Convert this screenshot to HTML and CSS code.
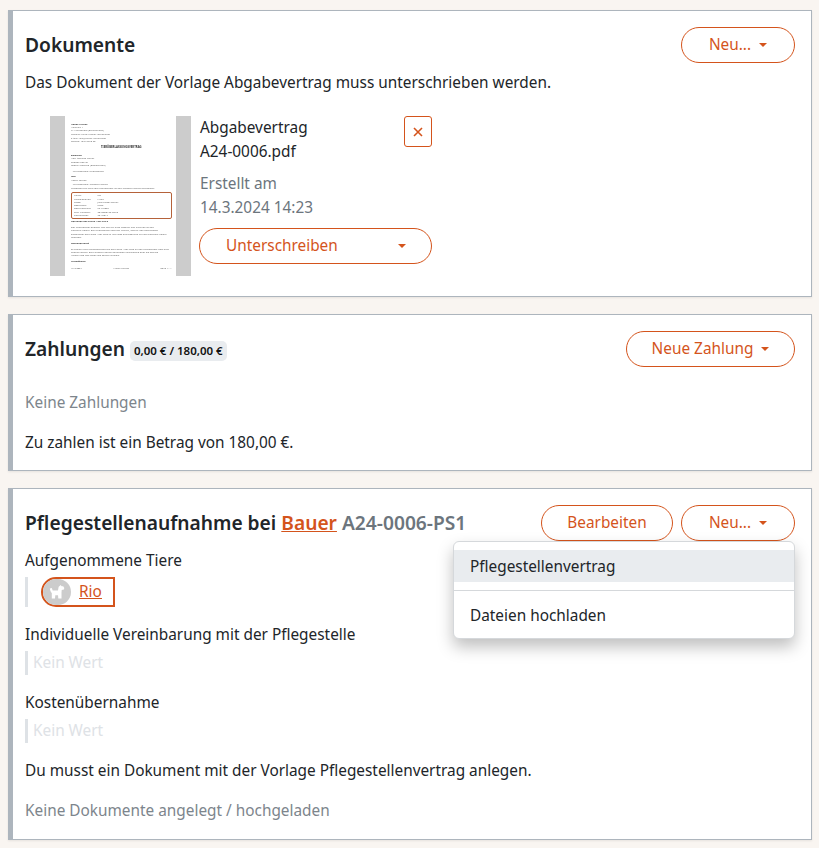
FILE: index.html
```html
<!DOCTYPE html>
<html lang="de">
<head>
    <meta charset="UTF-8">
    <title>Vermittlung</title>
    <link rel="stylesheet" href="styles.css">
</head>
<body>
    <section class="card card-docs">
        <div class="card-head">
            <h2>Dokumente</h2>
            <button class="btn btn-neu">Neu... <span class="caret"></span></button>
        </div>
        <p class="line">Das Dokument der Vorlage Abgabevertrag muss unterschrieben werden.</p>
        <div class="doc">
            <div class="thumb">
                <div class="page">
                    <b>Happy Ferries</b>
                    <span>Hauptstr. 1</span>
                    <span>71 Herrenberg (Deutschland)</span>
                    <span class="m1">Website: https://happy-ferries.com</span>
                    <span>E-Mail: info@happy-ferries.com</span>
                    <span>Telefon: 1234 5678 90</span>
                    <b class="page-title">TIERÜBERLASSUNGSVERTRAG</b>
                    <b class="m2">zwischen</b>
                    <span>Herr Manfred Walter</span>
                    <span>Großer Weg 36</span>
                    <span>98593 Homburg (Deutschland)</span>
                    <span class="m3">– im Folgenden: Übernehmer –</span>
                    <b class="m1">und</b>
                    <span class="m1">Happy Ferries</span>
                    <span class="m1">– im Folgenden: Tierschutzverein –</span>
                    <span class="m1">Folgendes Tier wird vom Übernehmer an den Tierschutzverein übergeben:</span>
                    <div class="page-box">
                        <span>Name:<i>Rio</i></span>
                        <span>Klasse/Spezies:<i>Hund</i></span>
                        <span>Rasse:<i>Jack Russell Terrier</i></span>
                        <span>Geschlecht:<i>Rüde</i></span>
                        <span>Geburtsdatum:<i>ca. 6.2023</i></span>
                        <span>Chip-Nummer:<i>981000012345672</i></span>
                        <span>Tiernummer:<i>T24-0017</i></span>
                    </div>
                    <b>Übergabe des Tieres / der Tiere</b>
                    <span class="m2">Der Übernehmer übergibt das Tier mit allen Rechten und Pflichten an den Tierschutzverein. Der Übernehmer bestätigt hiermit, dass er der rechtmäßige Eigentümer des Tieres / der Tiere ist und dass das Eigentum auf den Tierschutzverein übergeht.</span>
                    <b class="m2">Rückgaberecht</b>
                    <span class="m2">Es besteht kein Rückgabeanspruch des Tieres / der Tiere an den Übernehmer oder eine andere Person. Der Tierschutzverein entscheidet selbständig über die weitere Vermittlung des Tieres und seinen Verbleib.</span>
                    <b class="m2">Vermittlung</b>
                    <div class="page-foot"><span>16.3.2024</span><span>Happy Ferries</span><span>Seite 1 / 1</span></div>
                </div>
            </div>
            <div class="doc-info">
                <div class="doc-top">
                    <div class="doc-name">Abgabevertrag<br>A24-0006.pdf</div>
                    <button class="btn-x" aria-label="Entfernen">
                        <svg width="10" height="10" viewBox="0 0 10 10"><path d="M1 1 9 9M9 1 1 9" stroke="#d4541c" stroke-width="1.6"/></svg>
                    </button>
                </div>
                <div class="doc-date">Erstellt am<br>14.3.2024 14:23</div>
                <button class="btn btn-sign"><span>Unterschreiben</span><span class="caret"></span></button>
            </div>
        </div>
    </section>

    <section class="card card-pay">
        <div class="card-head">
            <h2>Zahlungen <span class="badge">0,00 € / 180,00 €</span></h2>
            <button class="btn btn-pay">Neue Zahlung <span class="caret"></span></button>
        </div>
        <p class="line muted pay-none">Keine Zahlungen</p>
        <p class="line pay-sum">Zu zahlen ist ein Betrag von 180,00 €.</p>
    </section>

    <section class="card card-foster">
        <div class="card-head">
            <h2>Pflegestellenaufnahme bei <a href="#">Bauer</a> <span class="ref">A24-0006-PS1</span></h2>
            <div class="head-btns">
                <button class="btn btn-edit">Bearbeiten</button>
                <button class="btn btn-neu">Neu... <span class="caret"></span></button>
                <div class="menu">
                    <div class="menu-item active">Pflegestellenvertrag</div>
                    <div class="menu-sep"></div>
                    <div class="menu-item">Dateien hochladen</div>
                </div>
            </div>
        </div>
        <div class="label first">Aufgenommene Tiere</div>
        <div class="value">
            <a class="pet" href="#">
                <span class="pet-pic">
                    <svg width="18" height="18" viewBox="0 0 18 18"><path fill="#fff" d="M1.800 5.500 3.800 5l.9 2.600h5.300l.5-3c.1-.7.500-1.300 1.200-1.500L12.500 2l1.200 1.200h1.500l1.100 1.700-.4 1.700-2.200.5-.2 2.700V15.500h-3.200l-.3-3.200H7.300l-.3 3.200H3.800V10C2.700 9 2.100 7.300 1.800 5.500z"/></svg>
                </span>
                <span class="pet-name">Rio</span>
            </a>
        </div>
        <div class="label">Individuelle Vereinbarung mit der Pflegestelle</div>
        <div class="value empty">Kein Wert</div>
        <div class="label">Kostenübernahme</div>
        <div class="value empty">Kein Wert</div>
        <p class="line foster-note">Du musst ein Dokument mit der Vorlage Pflegestellenvertrag anlegen.</p>
        <p class="line muted foster-none">Keine Dokumente angelegt / hochgeladen</p>
    </section>
</body>
</html>
```

FILE: styles.css
```css
body {
    margin: 0;
    padding: 10px 7px 8px 8px;
    background: #f9f5f1;
    color: #212529;
    font-family: "Noto Sans", sans-serif;
    font-size: 15.36px;
    line-height: 24px;
}

.card {
    background: #fff;
    border: 1px solid #adb5bd;
    border-left-width: 5px;
    padding: 16px 16px 0 12px;
    margin-bottom: 17px;
    box-shadow: 0 1px 2px rgba(0, 0, 0, 0.08);
}

.card-docs {
    height: 269px;
}

.card-pay {
    height: 139px;
}

.card-foster {
    height: 334px;
    margin-bottom: 0;
}

.card-head {
    display: flex;
    justify-content: space-between;
    align-items: center;
    height: 36px;
}

h2 {
    margin: 0;
    font-size: 19.2px;
    font-weight: 600;
    line-height: 24px;
}

h2 a {
    color: #d4541c;
}

.ref {
    color: #6c757d;
}

.badge {
    display: inline-block;
    background: #e9ecef;
    color: #111;
    border-radius: 5px;
    padding: 0 4px;
    font-size: 11.5px;
    line-height: 20px;
    font-weight: 600;
    vertical-align: 1px;
}

.line {
    margin: 0;
}

.muted {
    color: #7d858c;
}

.btn {
    display: flex;
    align-items: center;
    justify-content: center;
    gap: 8px;
    height: 36px;
    padding: 0;
    background: #fff;
    border: 1px solid #d4541c;
    border-radius: 18px;
    color: #d4541c;
    font: inherit;
    cursor: pointer;
}

.btn-neu {
    width: 114px;
}

.btn-pay {
    width: 169px;
}

.btn-edit {
    width: 132px;
}

.btn-sign {
    width: 233px;
    justify-content: space-between;
    padding: 0 25px 0 26px;
}

.caret {
    width: 0;
    height: 0;
    border-top: 4px solid #d4541c;
    border-left: 4px solid transparent;
    border-right: 4px solid transparent;
}

.card-docs .line {
    margin-top: 8px;
}

.doc {
    display: flex;
    gap: 8px;
    margin: 21px 0 0 25px;
}

.thumb {
    width: 111px;
    height: 160px;
    padding: 0 15px;
    background: #ccc;
}

.page {
    display: flex;
    flex-direction: column;
    height: 160px;
    box-sizing: border-box;
    padding: 6.5px 4.500px 0 6px;
    background: #fff;
    color: #666;
    font-size: 2.4px;
    line-height: 3.3px;
    overflow: hidden;
    filter: blur(0.25px);
}

.page b {
    color: #333;
}

.page-title {
    align-self: center;
    margin: 3px 0 2px;
    font-size: 2.8px;
}

.page-box {
    display: flex;
    flex-direction: column;
    margin: 1.500px 0 1.500px;
    padding: 1px 0 0.500px 2px;
    border: 0.7px solid #b5623a;
    border-radius: 2px;
}

.page-box span {
    display: flex;
}

.page-box i {
    margin-left: auto;
    width: 73px;
    font-style: normal;
}

.page-foot {
    display: flex;
    justify-content: space-between;
    margin-top: 4px;
}

.m1 { margin-top: 1px; }
.m2 { margin-top: 2.500px; }
.m3 { margin-top: 3px; }

.doc-info {
    width: 232px;
    margin-left: 1px;
}

.doc-top {
    display: flex;
    justify-content: space-between;
    align-items: flex-start;
}

.btn-x {
    display: flex;
    align-items: center;
    justify-content: center;
    width: 28px;
    height: 31px;
    padding: 0;
    background: #fff;
    border: 1px solid #d4541c;
    border-radius: 3px;
}

.doc-date {
    margin: 8px 0 8px;
    color: #6c757d;
}

.btn-sign {
    margin-left: -1px;
}

.pay-none {
    margin-top: 24px;
}

.pay-sum {
    margin-top: 16px;
}

.head-btns {
    position: relative;
    display: flex;
    gap: 8px;
}

.menu {
    position: absolute;
    top: 36px;
    right: 0;
    width: 340px;
    height: 88px;
    padding-top: 8px;
    background: #fff;
    border: 1px solid #d5d8db;
    border-radius: 6px;
    box-shadow: 0 8px 16px rgba(0, 0, 0, 0.25);
    z-index: 5;
}

.menu-item {
    height: 32px;
    padding-left: 16px;
    line-height: 33px;
}

.menu-item.active {
    background: #e9ecef;
}

.menu-sep {
    height: 1px;
    margin: 8px 0;
    background: #d5d8db;
}

.label {
    margin-top: 16px;
    margin-bottom: -1px;
}

.label.first {
    margin-top: 8px;
}

.value {
    margin-top: 5px;
    border-left: 3px solid #dee2e6;
    padding-left: 13px;
    height: 30px;
}

.value.empty {
    height: 24px;
    padding-left: 5px;
    line-height: 24px;
    color: #dee2e6;
}

.pet {
    display: inline-flex;
    align-items: center;
    box-sizing: border-box;
    height: 30px;
    width: 74px;
    border: 2px solid #d4541c;
    border-radius: 15px 0 0 15px;
    color: #d4541c;
}

.pet-pic {
    display: flex;
    align-items: center;
    justify-content: center;
    width: 28px;
    height: 26px;
    background: #ccc;
    border-radius: 13px;
}

.pet-name {
    margin: 0 0 0 8px;
    text-decoration: underline;
}

.foster-note {
    margin-top: 16px;
}

.foster-none {
    margin-top: 16px;
}
```
